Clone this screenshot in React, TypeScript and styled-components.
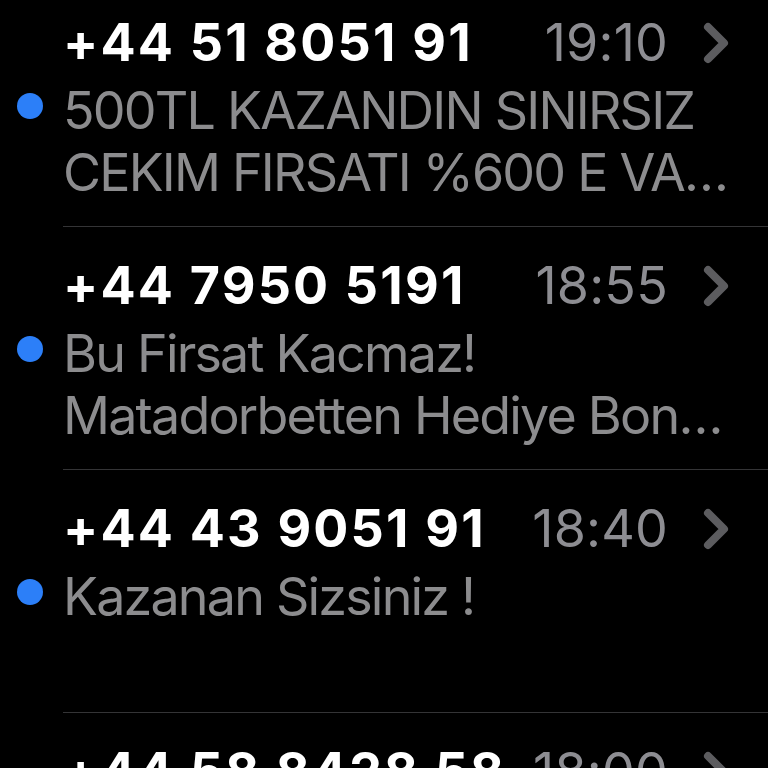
import React from 'react';
import styled, { createGlobalStyle } from 'styled-components';

const GlobalStyle = createGlobalStyle`
  html, body {
    margin: 0;
    padding: 0;
    background: #000;
    overflow: hidden;
  }
  body {
    font-family: Inter, "Liberation Sans", sans-serif;
  }
`;

type Message = {
  id: number;
  sender: string;
  time: string;
  // preview is kept as the lines the list shows, last one gets cut with "..."
  lines: string[];
  unread: boolean;
};

const messages: Message[] = [
  { id: 1, sender: '+44 51 8051 91', time: '19:10', lines: ['500TL KAZANDIN SINIRSIZ', 'CEKIM FIRSATI %600 E VARAN BONUS'], unread: true },
  { id: 2, sender: '+44 7950 5191', time: '18:55', lines: ['Bu Firsat Kacmaz!', 'Matadorbetten Hediye Bonuslar'], unread: true },
  { id: 3, sender: '+44 43 9051 91', time: '18:40', lines: ['Kazanan Sizsiniz !'], unread: true },
  { id: 4, sender: '+44 58 8428 58', time: '18:00', lines: ['Hosgeldin bonusu seni bekliyor'], unread: true },
];

const Screen = styled.div`
  width: 768px;
  height: 768px;
  background: #000;
  overflow: hidden;
`;

const List = styled.div`
  margin-top: -16px;
  display: flex;
  flex-direction: column;
`;

const Row = styled.div`
  display: flex;
  height: 243px;
`;

const DotCol = styled.div`
  width: 63px;
  flex: none;
  padding: 109px 0 0 17px;
  box-sizing: border-box;
`;

const Dot = styled.div<{ $on: boolean }>`
  width: 26px;
  height: 26px;
  border-radius: 50%;
  background: ${p => (p.$on ? '#2c7ff8' : 'transparent')};
`;

const Body = styled.div`
  flex: 1;
  min-width: 0;
  padding-top: 28px;
  border-bottom: 1.5px solid #343436;
  box-sizing: border-box;
`;

const Header = styled.div`
  display: flex;
  align-items: center;
  height: 62px;
  padding-right: 39px;
`;

const Sender = styled.div`
  flex: 1;
  font-size: 52px;
  line-height: 62px;
  font-weight: 700;
  color: #fff;
  letter-spacing: 2.2px;
  white-space: nowrap;
`;

const Time = styled.div`
  font-size: 52px;
  line-height: 62px;
  font-weight: 400;
  color: #8d8d92;
  letter-spacing: 0.2px;
`;

const Chevron = styled.svg`
  margin-left: 35px;
  width: 26px;
  height: 42px;
  flex: none;
`;

const Preview = styled.div`
  margin-top: 6px;
  padding-right: 30px;
  height: 124px;
  color: #8c8c8e;
`;

const PreviewLine = styled.div`
  font-size: 52px;
  line-height: 62px;
  letter-spacing: -1.8px;
  white-space: nowrap;
  overflow: hidden;
  text-overflow: ellipsis;
`;

const MessageRow: React.FC<{ m: Message }> = ({ m }) => (
  <Row>
    <DotCol>
      <Dot $on={m.unread} />
    </DotCol>
    <Body>
      <Header>
        <Sender>{m.sender}</Sender>
        <Time>{m.time}</Time>
        <Chevron viewBox="0 0 26 42">
          <path d="M5 5 L21 21 L5 37" fill="none" stroke="#5c5c5f" strokeWidth="8" strokeLinecap="round" strokeLinejoin="round" />
        </Chevron>
      </Header>
      <Preview>
        {m.lines.map((l, i) => (
          <PreviewLine key={i}>{l}</PreviewLine>
        ))}
      </Preview>
    </Body>
  </Row>
);

export default function App() {
  return (
    <Screen>
      <GlobalStyle />
      <List>
        {messages.map(m => (
          <MessageRow key={m.id} m={m} />
        ))}
      </List>
    </Screen>
  );
}
